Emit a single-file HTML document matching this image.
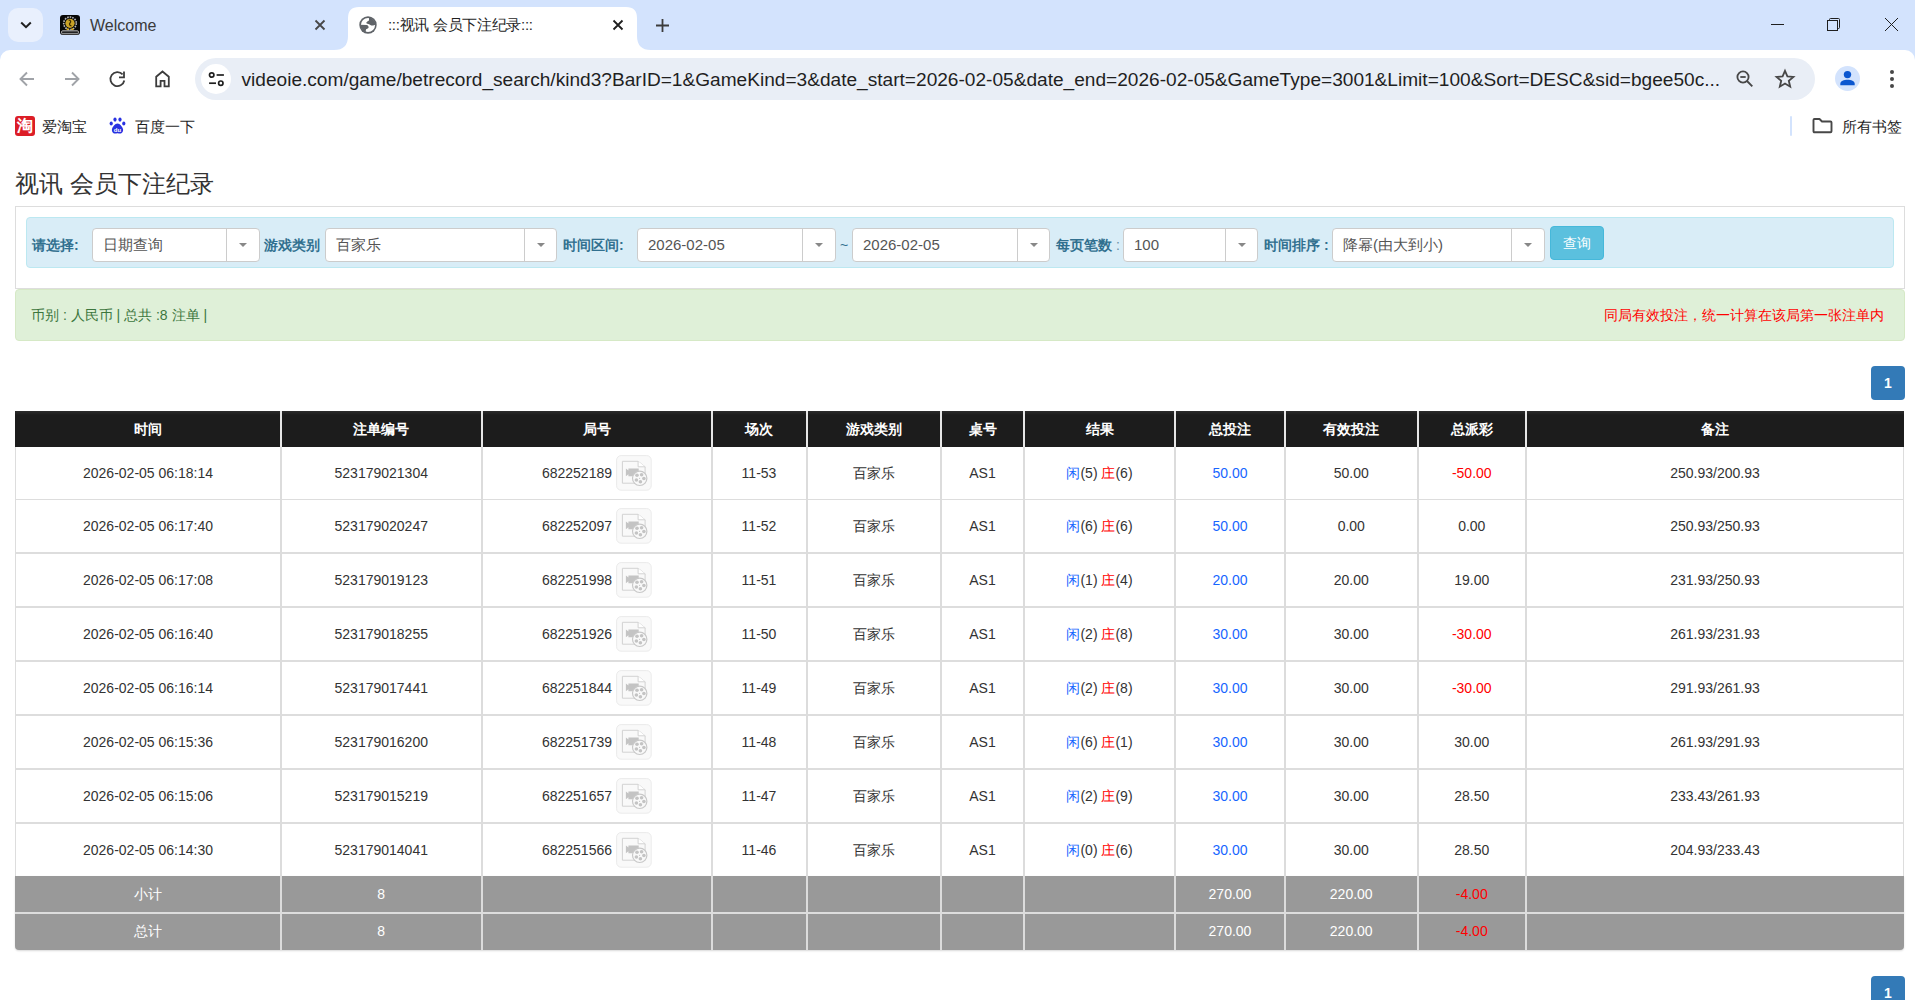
<!DOCTYPE html><html><head><meta charset="utf-8"><style>
*{box-sizing:border-box;margin:0;padding:0}
html,body{width:1915px;height:1000px;overflow:hidden;background:#fff}
body{position:relative;font-family:"Liberation Sans",sans-serif;color:#333}
.a{position:absolute}
.t{position:absolute;white-space:nowrap;line-height:1}
svg{position:absolute;overflow:visible}
</style></head><body>
<div class="a" style="left:0;top:0;width:1915px;height:62px;background:#d3e3fd"></div>
<div class="a" style="left:8px;top:8px;width:35px;height:34px;border-radius:10px;background:#e9f0fd"></div>
<svg style="left:20px;top:21px" width="12" height="8"><path d="M1.2 1.5 L6 6.2 L10.8 1.5" fill="none" stroke="#1f1f1f" stroke-width="2"/></svg>
<svg style="left:60px;top:15px" width="20" height="20" viewBox="0 0 20 20"><rect x="0" y="0" width="20" height="20" rx="3" fill="#060606"/><circle cx="10" cy="8.3" r="6.3" fill="none" stroke="#b8b8b8" stroke-width="1.6" stroke-dasharray="1.6 1"/><circle cx="10" cy="8.3" r="4.6" fill="#c9a227"/><path d="M8.5 5 C10.5 5 11.5 6.5 10 8 C9 9 9.5 10.5 11.5 11" fill="none" stroke="#3a2a00" stroke-width="1.2"/><circle cx="7.6" cy="14.2" r="1" fill="#e0a800"/><circle cx="12.4" cy="14.2" r="1" fill="#e0a800"/><rect x="1.6" y="15.8" width="16.8" height="3" rx="1" fill="#222" stroke="#c8c8c8" stroke-width="0.9"/></svg>
<div class="t" style="left:90px;top:18.2px;font-size:16px;color:#3a3a3a">Welcome</div>
<svg style="left:315px;top:20px" width="10" height="10"><path d="M0.5 0.5 L9.5 9.5 M9.5 0.5 L0.5 9.5" stroke="#474747" stroke-width="1.8"/></svg>
<svg style="left:0;top:0" width="1915" height="50"><path d="M334 50 Q348 50 348 36 L348 18 Q348 7 359 7 L626 7 Q637 7 637 18 L637 36 Q637 50 651 50 Z" fill="#fff"/></svg>
<svg style="left:355px;top:12px" width="26" height="26" viewBox="0 0 26 26"><defs><clipPath id="gc"><circle cx="13" cy="13" r="7.6"/></clipPath></defs><circle cx="13" cy="13" r="8.7" fill="#5f6368"/><circle cx="13" cy="13" r="7.1" fill="#fff"/><g clip-path="url(#gc)" fill="#5f6368"><path d="M14 3 L14 7.8 C14 8.8 13 9.2 12 9.8 C11 10.4 11.2 11.6 12.4 11.8 C13.6 12 14.6 12.4 15.4 13 C16.4 13.6 17.6 13.7 19 13.2 L23 12 L23 3 Z"/><path d="M3 12.7 L11.6 12.9 C12.8 13 13.6 14 13.6 15.2 C13.6 16.2 12.6 16.6 11.6 16.9 C10.9 17.2 10.8 17.8 10.8 18.6 L10.8 23 L3 23 Z"/></g></svg>
<div class="t" style="left:388px;top:16.8px;font-size:15px;letter-spacing:-0.3px;color:#1f1f1f">:::视讯 会员下注纪录:::</div>
<svg style="left:612.5px;top:20px" width="10" height="10"><path d="M0.5 0.5 L9.5 9.5 M9.5 0.5 L0.5 9.5" stroke="#1f1f1f" stroke-width="1.8"/></svg>
<svg style="left:656px;top:18.5px" width="13" height="13"><path d="M6.5 0 V13 M0 6.5 H13" stroke="#3c3c3c" stroke-width="1.8"/></svg>
<div class="a" style="left:1771px;top:24px;width:13px;height:1px;background:#1f1f1f"></div>
<svg style="left:1827px;top:18px" width="14" height="14"><path d="M2.5 2.5 V1.5 Q2.5 0.5 3.5 0.5 H11.5 Q12.5 0.5 12.5 1.5 V9.5 Q12.5 10.5 11.5 10.5 H10.5" fill="none" stroke="#1f1f1f" stroke-width="1"/><rect x="0.5" y="2.5" width="10" height="10" fill="none" stroke="#1f1f1f" stroke-width="1"/></svg>
<svg style="left:1885px;top:18px" width="13" height="13"><path d="M0 0 L13 13 M13 0 L0 13" stroke="#1f1f1f" stroke-width="1"/></svg>
<div class="a" style="left:0;top:50px;width:1915px;height:58px;background:#fff;border-radius:10px 10px 0 0"></div>
<svg style="left:19px;top:71px" width="16" height="16"><path d="M15 8 H2 M8 1.5 L1.5 8 L8 14.5" fill="none" stroke="#a0a3a8" stroke-width="1.9"/></svg>
<svg style="left:64px;top:71px" width="16" height="16"><path d="M1 8 H14 M8 1.5 L14.5 8 L8 14.5" fill="none" stroke="#a0a3a8" stroke-width="1.9"/></svg>
<svg style="left:109px;top:70.5px" width="17" height="17"><path d="M15.3 9.5 A7 7 0 1 1 13.6 3.4" fill="none" stroke="#3c3c3c" stroke-width="1.8"/><path d="M10 6.3 H15 V0.4" fill="none" stroke="#3c3c3c" stroke-width="1.8"/></svg>
<svg style="left:154px;top:70px" width="17" height="18"><path d="M2.2 16.3 V6.7 L8.5 1.5 L14.8 6.7 V16.3 H10.5 V10.8 H6.6 V16.3 Z" fill="none" stroke="#3c3c3c" stroke-width="1.8" stroke-linejoin="miter"/></svg>
<div class="a" style="left:195px;top:58px;width:1620px;height:42px;border-radius:21px;background:#e9eef6"></div>
<div class="a" style="left:201px;top:64px;width:30px;height:30px;border-radius:50%;background:#fff"></div>
<svg style="left:208px;top:72px" width="17" height="15"><circle cx="3.7" cy="3" r="2.2" fill="none" stroke="#1f1f1f" stroke-width="1.7"/><path d="M8.6 3 H15.9" stroke="#1f1f1f" stroke-width="1.7"/><circle cx="12.8" cy="11.2" r="2.2" fill="none" stroke="#1f1f1f" stroke-width="1.7"/><path d="M1.1 11.2 H8" stroke="#1f1f1f" stroke-width="1.7"/></svg>
<div class="t" id="url" style="left:241.5px;top:69.8px;font-size:19.1px;color:#1f1f1f">videoie.com/game/betrecord_search/kind3?BarID=1&amp;GameKind=3&amp;date_start=2026-02-05&amp;date_end=2026-02-05&amp;GameType=3001&amp;Limit=100&amp;Sort=DESC&amp;sid=bgee50c...</div>
<svg style="left:1736px;top:70px" width="18" height="18"><circle cx="7" cy="7" r="5.6" fill="none" stroke="#474747" stroke-width="1.8"/><path d="M4.3 7 H9.7" stroke="#474747" stroke-width="1.8"/><path d="M11 11 L16.3 16.3" stroke="#474747" stroke-width="1.9"/></svg>
<svg style="left:1775px;top:69px" width="20" height="20" viewBox="0 0 20 20"><path d="M10 1.8 L12.4 7.4 L18.4 7.9 L13.8 11.8 L15.2 17.7 L10 14.6 L4.8 17.7 L6.2 11.8 L1.6 7.9 L7.6 7.4 Z" fill="none" stroke="#474747" stroke-width="1.8" stroke-linejoin="miter"/></svg>
<div class="a" style="left:1835px;top:66px;width:25px;height:25px;border-radius:50%;background:#d3e3fd"></div>
<svg style="left:1839px;top:70px" width="17" height="17" viewBox="0 0 17 17"><circle cx="8.5" cy="4.6" r="3.7" fill="#0b57d0"/><path d="M1.3 15.3 V13.8 C1.3 11.2 5 9.8 8.5 9.8 C12 9.8 15.7 11.2 15.7 13.8 V15.3 Z" fill="#0b57d0"/></svg>
<div class="a" style="left:1890.3px;top:70px;width:4px;height:4px;border-radius:50%;background:#474747"></div>
<div class="a" style="left:1890.3px;top:76.7px;width:4px;height:4px;border-radius:50%;background:#474747"></div>
<div class="a" style="left:1890.3px;top:83.6px;width:4px;height:4px;border-radius:50%;background:#474747"></div>
<div class="a" style="left:15px;top:116px;width:20px;height:20px;border-radius:3px;background:#dc1d26"></div>
<div class="t" style="left:17px;top:118px;font-size:16px;color:#fff;font-weight:bold">淘</div>
<div class="t" style="left:42px;top:119px;font-size:15px;color:#1f1f1f">爱淘宝</div>
<svg style="left:109px;top:117px" width="17" height="17" viewBox="0 0 17 17"><ellipse cx="2.2" cy="6.5" rx="1.6" ry="2" fill="#2932e1"/><ellipse cx="6" cy="2.6" rx="1.6" ry="2.1" fill="#2932e1"/><ellipse cx="11" cy="2.6" rx="1.6" ry="2.1" fill="#2932e1"/><ellipse cx="14.8" cy="6.5" rx="1.6" ry="2" fill="#2932e1"/><path d="M8.5 6.5 C6 6.5 3.5 10 3 12 C2.5 14.5 4 16.6 6 16.6 C7.2 16.6 7.8 16.2 8.5 16.2 C9.2 16.2 9.8 16.6 11 16.6 C13 16.6 14.5 14.5 14 12 C13.5 10 11 6.5 8.5 6.5Z" fill="#2932e1"/><text x="8.5" y="15" font-size="6" fill="#fff" text-anchor="middle" font-family="Liberation Sans" font-weight="bold">du</text></svg>
<div class="t" style="left:135px;top:119px;font-size:15px;color:#1f1f1f">百度一下</div>
<div class="a" style="left:1790px;top:116px;width:2px;height:20px;border-radius:1px;background:#d3e3fd"></div>
<svg style="left:1812px;top:117px" width="22" height="17"><path d="M1.5 3 Q1.5 2 2.5 2 H7.5 L10 4.5 H18.5 Q19.5 4.5 19.5 5.5 V14.3 Q19.5 15.3 18.5 15.3 H2.5 Q1.5 15.3 1.5 14.3 Z" fill="none" stroke="#474747" stroke-width="1.9" stroke-linejoin="round"/></svg>
<div class="t" style="left:1842px;top:119px;font-size:15px;color:#1f1f1f">所有书签</div>
<div class="t" style="left:15px;top:172px;font-size:24px;color:#333">视讯 会员下注纪录</div>
<div class="a" style="left:15px;top:206px;width:1890px;height:83px;border:1px solid #ddd"></div>
<div class="a" style="left:26px;top:217px;width:1868px;height:51px;border:1px solid #bce8f1;border-radius:4px;background:#d9edf7"></div>
<div class="t" style="left:32px;top:238px;font-size:14px;font-weight:bold;color:#31708f">请选择:</div>
<div class="a" style="left:92px;top:228px;width:168px;height:34px;border:1px solid #ccc;border-radius:4px;background:#fff"></div>
<div class="a" style="left:226px;top:229px;width:1px;height:32px;background:#ccc"></div>
<svg style="left:239.0px;top:243px" width="8" height="4"><path d="M0 0 H8 L4 4 Z" fill="#888"/></svg>
<div class="t" style="left:103px;top:236.6px;font-size:15px;color:#555">日期查询</div>
<div class="t" style="left:264px;top:238px;font-size:14px;font-weight:bold;color:#31708f">游戏类别</div>
<div class="a" style="left:325px;top:228px;width:232px;height:34px;border:1px solid #ccc;border-radius:4px;background:#fff"></div>
<div class="a" style="left:524px;top:229px;width:1px;height:32px;background:#ccc"></div>
<svg style="left:536.5px;top:243px" width="8" height="4"><path d="M0 0 H8 L4 4 Z" fill="#888"/></svg>
<div class="t" style="left:336px;top:236.6px;font-size:15px;color:#555">百家乐</div>
<div class="t" style="left:563px;top:238px;font-size:14px;font-weight:bold;color:#31708f">时间区间:</div>
<div class="a" style="left:637px;top:228px;width:199px;height:34px;border:1px solid #ccc;border-radius:4px;background:#fff"></div>
<div class="a" style="left:802px;top:229px;width:1px;height:32px;background:#ccc"></div>
<svg style="left:815.0px;top:243px" width="8" height="4"><path d="M0 0 H8 L4 4 Z" fill="#888"/></svg>
<div class="t" style="left:648px;top:236.6px;font-size:15px;color:#555">2026-02-05</div>
<div class="t" style="left:840px;top:238px;font-size:14px;color:#31708f">~</div>
<div class="a" style="left:852px;top:228px;width:198px;height:34px;border:1px solid #ccc;border-radius:4px;background:#fff"></div>
<div class="a" style="left:1017px;top:229px;width:1px;height:32px;background:#ccc"></div>
<svg style="left:1029.5px;top:243px" width="8" height="4"><path d="M0 0 H8 L4 4 Z" fill="#888"/></svg>
<div class="t" style="left:863px;top:236.6px;font-size:15px;color:#555">2026-02-05</div>
<div class="t" style="left:1056px;top:238px;font-size:14px;font-weight:bold;color:#31708f">每页笔数 <span style="font-weight:normal;color:#6a8fa5">:</span></div>
<div class="a" style="left:1123px;top:228px;width:135px;height:34px;border:1px solid #ccc;border-radius:4px;background:#fff"></div>
<div class="a" style="left:1225px;top:229px;width:1px;height:32px;background:#ccc"></div>
<svg style="left:1237.5px;top:243px" width="8" height="4"><path d="M0 0 H8 L4 4 Z" fill="#888"/></svg>
<div class="t" style="left:1134px;top:236.6px;font-size:15px;color:#555">100</div>
<div class="t" style="left:1264px;top:238px;font-size:14px;font-weight:bold;color:#31708f">时间排序 :</div>
<div class="a" style="left:1332px;top:228px;width:213px;height:34px;border:1px solid #ccc;border-radius:4px;background:#fff"></div>
<div class="a" style="left:1511px;top:229px;width:1px;height:32px;background:#ccc"></div>
<svg style="left:1524.0px;top:243px" width="8" height="4"><path d="M0 0 H8 L4 4 Z" fill="#888"/></svg>
<div class="t" style="left:1343px;top:236.6px;font-size:15px;color:#555">降幂(由大到小)</div>
<div class="a" style="left:1550px;top:226px;width:54px;height:34px;border-radius:4px;background:#5bc0de;border:1px solid #46b8da"></div>
<div class="t" style="left:1563px;top:236px;font-size:14px;color:#fff">查询</div>
<div class="a" style="left:15px;top:289px;width:1890px;height:52px;border:1px solid #d6e9c6;border-radius:4px;background:#dff0d8"></div>
<div class="t" style="left:31px;top:308px;font-size:14px;color:#3c763d">币别 : 人民币 | 总共 :8 注单 |</div>
<div class="t" style="left:1604px;top:308px;font-size:14px;color:#f00">同局有效投注，统一计算在该局第一张注单内</div>
<div class="a" style="left:1871px;top:366px;width:34px;height:34px;border-radius:4px;background:#337ab7"></div>
<div class="t" style="left:1871px;top:376px;width:34px;text-align:center;font-size:14px;font-weight:bold;color:#fff">1</div>
<div class="a" style="left:1871px;top:976px;width:34px;height:34px;border-radius:4px;background:#337ab7"></div>
<div class="t" style="left:1871px;top:986px;width:34px;text-align:center;font-size:14px;font-weight:bold;color:#fff">1</div>
<div class="a" style="left:15px;top:410.5px;width:1889px;height:36.5px;background:linear-gradient(#2c2c2c,#1c1c1c 4px)"></div>
<div class="t" style="left:15px;top:421.5px;width:266px;text-align:center;font-size:14px;font-weight:bold;color:#fff">时间</div>
<div class="t" style="left:281px;top:421.5px;width:200.5px;text-align:center;font-size:14px;font-weight:bold;color:#fff">注单编号</div>
<div class="t" style="left:481.5px;top:421.5px;width:230.0px;text-align:center;font-size:14px;font-weight:bold;color:#fff">局号</div>
<div class="t" style="left:711.5px;top:421.5px;width:95.0px;text-align:center;font-size:14px;font-weight:bold;color:#fff">场次</div>
<div class="t" style="left:806.5px;top:421.5px;width:134.5px;text-align:center;font-size:14px;font-weight:bold;color:#fff">游戏类别</div>
<div class="t" style="left:941px;top:421.5px;width:83px;text-align:center;font-size:14px;font-weight:bold;color:#fff">桌号</div>
<div class="t" style="left:1024px;top:421.5px;width:151px;text-align:center;font-size:14px;font-weight:bold;color:#fff">结果</div>
<div class="t" style="left:1175px;top:421.5px;width:110px;text-align:center;font-size:14px;font-weight:bold;color:#fff">总投注</div>
<div class="t" style="left:1285px;top:421.5px;width:132.5px;text-align:center;font-size:14px;font-weight:bold;color:#fff">有效投注</div>
<div class="t" style="left:1417.5px;top:421.5px;width:108.5px;text-align:center;font-size:14px;font-weight:bold;color:#fff">总派彩</div>
<div class="t" style="left:1526px;top:421.5px;width:378px;text-align:center;font-size:14px;font-weight:bold;color:#fff">备注</div>
<div class="a" style="left:15px;top:499px;width:1889px;height:1.3px;background:#ddd"></div>
<div class="a" style="left:15px;top:552px;width:1889px;height:2px;background:#ddd"></div>
<div class="a" style="left:15px;top:606px;width:1889px;height:2px;background:#ddd"></div>
<div class="a" style="left:15px;top:660px;width:1889px;height:2px;background:#ddd"></div>
<div class="a" style="left:15px;top:714px;width:1889px;height:2px;background:#ddd"></div>
<div class="a" style="left:15px;top:768px;width:1889px;height:2px;background:#ddd"></div>
<div class="a" style="left:15px;top:822px;width:1889px;height:2px;background:#ddd"></div>
<div class="t" style="left:15px;top:466.4px;width:266px;text-align:center;font-size:14px;color:#333">2026-02-05 06:18:14</div>
<div class="t" style="left:281px;top:466.4px;width:200.5px;text-align:center;font-size:14px;color:#333">523179021304</div>
<div class="t" style="left:481.5px;top:466.4px;width:130.5px;text-align:right;font-size:14px;color:#333">682252189</div>
<svg style="left:615.6px;top:454.6px" width="36" height="36" viewBox="0 0 36 36"><rect x="0.6" y="0.6" width="34.6" height="34.6" rx="4.5" fill="#f9f9f9" stroke="#ebebeb" stroke-width="1"/><path d="M6.4 6.3 H22.1 L29.1 11.8 V28.2 H6.4 Z" fill="#f9f9f9" stroke="#d2d2d2" stroke-width="1"/><path d="M22.1 6.3 V11.8 H29.1" fill="#fff" stroke="#d2d2d2" stroke-width="1"/><path d="M9.9 13.6 L12.4 15.6 V13.6 H22.7 V21.2 H12.4 V19.3 L9.9 21.2 Z" fill="#c4c4c4"/><circle cx="23.7" cy="23.3" r="7.2" fill="#f9f9f9" stroke="#c8c8c8" stroke-width="1.2"/><g fill="#c4c4c4"><circle cx="21" cy="20.3" r="1.8"/><circle cx="25.6" cy="19.7" r="1.8"/><circle cx="27.9" cy="23.5" r="1.8"/><circle cx="24.4" cy="26.8" r="1.8"/><circle cx="20.4" cy="25" r="1.8"/><circle cx="23.6" cy="23.3" r="0.6"/></g></svg>
<div class="t" style="left:711.5px;top:466.4px;width:95.0px;text-align:center;font-size:14px;color:#333">11-53</div>
<div class="t" style="left:806.5px;top:466.4px;width:134.5px;text-align:center;font-size:14px;color:#333">百家乐</div>
<div class="t" style="left:941px;top:466.4px;width:83px;text-align:center;font-size:14px;color:#333">AS1</div>
<div class="t" style="left:1024px;top:466.4px;width:151px;text-align:center;font-size:14px;color:#333"><span style="color:#1766ff">闲</span>(5) <span style="color:#f00">庄</span>(6)</div>
<div class="t" style="left:1175px;top:466.4px;width:110px;text-align:center;font-size:14px;color:#1766ff">50.00</div>
<div class="t" style="left:1285px;top:466.4px;width:132.5px;text-align:center;font-size:14px;color:#333">50.00</div>
<div class="t" style="left:1417.5px;top:466.4px;width:108.5px;text-align:center;font-size:14px;color:#f00">-50.00</div>
<div class="t" style="left:1526px;top:466.4px;width:378px;text-align:center;font-size:14px;color:#333">250.93/200.93</div>
<div class="t" style="left:15px;top:519.4px;width:266px;text-align:center;font-size:14px;color:#333">2026-02-05 06:17:40</div>
<div class="t" style="left:281px;top:519.4px;width:200.5px;text-align:center;font-size:14px;color:#333">523179020247</div>
<div class="t" style="left:481.5px;top:519.4px;width:130.5px;text-align:right;font-size:14px;color:#333">682252097</div>
<svg style="left:615.6px;top:507.6px" width="36" height="36" viewBox="0 0 36 36"><rect x="0.6" y="0.6" width="34.6" height="34.6" rx="4.5" fill="#f9f9f9" stroke="#ebebeb" stroke-width="1"/><path d="M6.4 6.3 H22.1 L29.1 11.8 V28.2 H6.4 Z" fill="#f9f9f9" stroke="#d2d2d2" stroke-width="1"/><path d="M22.1 6.3 V11.8 H29.1" fill="#fff" stroke="#d2d2d2" stroke-width="1"/><path d="M9.9 13.6 L12.4 15.6 V13.6 H22.7 V21.2 H12.4 V19.3 L9.9 21.2 Z" fill="#c4c4c4"/><circle cx="23.7" cy="23.3" r="7.2" fill="#f9f9f9" stroke="#c8c8c8" stroke-width="1.2"/><g fill="#c4c4c4"><circle cx="21" cy="20.3" r="1.8"/><circle cx="25.6" cy="19.7" r="1.8"/><circle cx="27.9" cy="23.5" r="1.8"/><circle cx="24.4" cy="26.8" r="1.8"/><circle cx="20.4" cy="25" r="1.8"/><circle cx="23.6" cy="23.3" r="0.6"/></g></svg>
<div class="t" style="left:711.5px;top:519.4px;width:95.0px;text-align:center;font-size:14px;color:#333">11-52</div>
<div class="t" style="left:806.5px;top:519.4px;width:134.5px;text-align:center;font-size:14px;color:#333">百家乐</div>
<div class="t" style="left:941px;top:519.4px;width:83px;text-align:center;font-size:14px;color:#333">AS1</div>
<div class="t" style="left:1024px;top:519.4px;width:151px;text-align:center;font-size:14px;color:#333"><span style="color:#1766ff">闲</span>(6) <span style="color:#f00">庄</span>(6)</div>
<div class="t" style="left:1175px;top:519.4px;width:110px;text-align:center;font-size:14px;color:#1766ff">50.00</div>
<div class="t" style="left:1285px;top:519.4px;width:132.5px;text-align:center;font-size:14px;color:#333">0.00</div>
<div class="t" style="left:1417.5px;top:519.4px;width:108.5px;text-align:center;font-size:14px;color:#333">0.00</div>
<div class="t" style="left:1526px;top:519.4px;width:378px;text-align:center;font-size:14px;color:#333">250.93/250.93</div>
<div class="t" style="left:15px;top:573.4px;width:266px;text-align:center;font-size:14px;color:#333">2026-02-05 06:17:08</div>
<div class="t" style="left:281px;top:573.4px;width:200.5px;text-align:center;font-size:14px;color:#333">523179019123</div>
<div class="t" style="left:481.5px;top:573.4px;width:130.5px;text-align:right;font-size:14px;color:#333">682251998</div>
<svg style="left:615.6px;top:561.6px" width="36" height="36" viewBox="0 0 36 36"><rect x="0.6" y="0.6" width="34.6" height="34.6" rx="4.5" fill="#f9f9f9" stroke="#ebebeb" stroke-width="1"/><path d="M6.4 6.3 H22.1 L29.1 11.8 V28.2 H6.4 Z" fill="#f9f9f9" stroke="#d2d2d2" stroke-width="1"/><path d="M22.1 6.3 V11.8 H29.1" fill="#fff" stroke="#d2d2d2" stroke-width="1"/><path d="M9.9 13.6 L12.4 15.6 V13.6 H22.7 V21.2 H12.4 V19.3 L9.9 21.2 Z" fill="#c4c4c4"/><circle cx="23.7" cy="23.3" r="7.2" fill="#f9f9f9" stroke="#c8c8c8" stroke-width="1.2"/><g fill="#c4c4c4"><circle cx="21" cy="20.3" r="1.8"/><circle cx="25.6" cy="19.7" r="1.8"/><circle cx="27.9" cy="23.5" r="1.8"/><circle cx="24.4" cy="26.8" r="1.8"/><circle cx="20.4" cy="25" r="1.8"/><circle cx="23.6" cy="23.3" r="0.6"/></g></svg>
<div class="t" style="left:711.5px;top:573.4px;width:95.0px;text-align:center;font-size:14px;color:#333">11-51</div>
<div class="t" style="left:806.5px;top:573.4px;width:134.5px;text-align:center;font-size:14px;color:#333">百家乐</div>
<div class="t" style="left:941px;top:573.4px;width:83px;text-align:center;font-size:14px;color:#333">AS1</div>
<div class="t" style="left:1024px;top:573.4px;width:151px;text-align:center;font-size:14px;color:#333"><span style="color:#1766ff">闲</span>(1) <span style="color:#f00">庄</span>(4)</div>
<div class="t" style="left:1175px;top:573.4px;width:110px;text-align:center;font-size:14px;color:#1766ff">20.00</div>
<div class="t" style="left:1285px;top:573.4px;width:132.5px;text-align:center;font-size:14px;color:#333">20.00</div>
<div class="t" style="left:1417.5px;top:573.4px;width:108.5px;text-align:center;font-size:14px;color:#333">19.00</div>
<div class="t" style="left:1526px;top:573.4px;width:378px;text-align:center;font-size:14px;color:#333">231.93/250.93</div>
<div class="t" style="left:15px;top:627.4px;width:266px;text-align:center;font-size:14px;color:#333">2026-02-05 06:16:40</div>
<div class="t" style="left:281px;top:627.4px;width:200.5px;text-align:center;font-size:14px;color:#333">523179018255</div>
<div class="t" style="left:481.5px;top:627.4px;width:130.5px;text-align:right;font-size:14px;color:#333">682251926</div>
<svg style="left:615.6px;top:615.6px" width="36" height="36" viewBox="0 0 36 36"><rect x="0.6" y="0.6" width="34.6" height="34.6" rx="4.5" fill="#f9f9f9" stroke="#ebebeb" stroke-width="1"/><path d="M6.4 6.3 H22.1 L29.1 11.8 V28.2 H6.4 Z" fill="#f9f9f9" stroke="#d2d2d2" stroke-width="1"/><path d="M22.1 6.3 V11.8 H29.1" fill="#fff" stroke="#d2d2d2" stroke-width="1"/><path d="M9.9 13.6 L12.4 15.6 V13.6 H22.7 V21.2 H12.4 V19.3 L9.9 21.2 Z" fill="#c4c4c4"/><circle cx="23.7" cy="23.3" r="7.2" fill="#f9f9f9" stroke="#c8c8c8" stroke-width="1.2"/><g fill="#c4c4c4"><circle cx="21" cy="20.3" r="1.8"/><circle cx="25.6" cy="19.7" r="1.8"/><circle cx="27.9" cy="23.5" r="1.8"/><circle cx="24.4" cy="26.8" r="1.8"/><circle cx="20.4" cy="25" r="1.8"/><circle cx="23.6" cy="23.3" r="0.6"/></g></svg>
<div class="t" style="left:711.5px;top:627.4px;width:95.0px;text-align:center;font-size:14px;color:#333">11-50</div>
<div class="t" style="left:806.5px;top:627.4px;width:134.5px;text-align:center;font-size:14px;color:#333">百家乐</div>
<div class="t" style="left:941px;top:627.4px;width:83px;text-align:center;font-size:14px;color:#333">AS1</div>
<div class="t" style="left:1024px;top:627.4px;width:151px;text-align:center;font-size:14px;color:#333"><span style="color:#1766ff">闲</span>(2) <span style="color:#f00">庄</span>(8)</div>
<div class="t" style="left:1175px;top:627.4px;width:110px;text-align:center;font-size:14px;color:#1766ff">30.00</div>
<div class="t" style="left:1285px;top:627.4px;width:132.5px;text-align:center;font-size:14px;color:#333">30.00</div>
<div class="t" style="left:1417.5px;top:627.4px;width:108.5px;text-align:center;font-size:14px;color:#f00">-30.00</div>
<div class="t" style="left:1526px;top:627.4px;width:378px;text-align:center;font-size:14px;color:#333">261.93/231.93</div>
<div class="t" style="left:15px;top:681.4px;width:266px;text-align:center;font-size:14px;color:#333">2026-02-05 06:16:14</div>
<div class="t" style="left:281px;top:681.4px;width:200.5px;text-align:center;font-size:14px;color:#333">523179017441</div>
<div class="t" style="left:481.5px;top:681.4px;width:130.5px;text-align:right;font-size:14px;color:#333">682251844</div>
<svg style="left:615.6px;top:669.6px" width="36" height="36" viewBox="0 0 36 36"><rect x="0.6" y="0.6" width="34.6" height="34.6" rx="4.5" fill="#f9f9f9" stroke="#ebebeb" stroke-width="1"/><path d="M6.4 6.3 H22.1 L29.1 11.8 V28.2 H6.4 Z" fill="#f9f9f9" stroke="#d2d2d2" stroke-width="1"/><path d="M22.1 6.3 V11.8 H29.1" fill="#fff" stroke="#d2d2d2" stroke-width="1"/><path d="M9.9 13.6 L12.4 15.6 V13.6 H22.7 V21.2 H12.4 V19.3 L9.9 21.2 Z" fill="#c4c4c4"/><circle cx="23.7" cy="23.3" r="7.2" fill="#f9f9f9" stroke="#c8c8c8" stroke-width="1.2"/><g fill="#c4c4c4"><circle cx="21" cy="20.3" r="1.8"/><circle cx="25.6" cy="19.7" r="1.8"/><circle cx="27.9" cy="23.5" r="1.8"/><circle cx="24.4" cy="26.8" r="1.8"/><circle cx="20.4" cy="25" r="1.8"/><circle cx="23.6" cy="23.3" r="0.6"/></g></svg>
<div class="t" style="left:711.5px;top:681.4px;width:95.0px;text-align:center;font-size:14px;color:#333">11-49</div>
<div class="t" style="left:806.5px;top:681.4px;width:134.5px;text-align:center;font-size:14px;color:#333">百家乐</div>
<div class="t" style="left:941px;top:681.4px;width:83px;text-align:center;font-size:14px;color:#333">AS1</div>
<div class="t" style="left:1024px;top:681.4px;width:151px;text-align:center;font-size:14px;color:#333"><span style="color:#1766ff">闲</span>(2) <span style="color:#f00">庄</span>(8)</div>
<div class="t" style="left:1175px;top:681.4px;width:110px;text-align:center;font-size:14px;color:#1766ff">30.00</div>
<div class="t" style="left:1285px;top:681.4px;width:132.5px;text-align:center;font-size:14px;color:#333">30.00</div>
<div class="t" style="left:1417.5px;top:681.4px;width:108.5px;text-align:center;font-size:14px;color:#f00">-30.00</div>
<div class="t" style="left:1526px;top:681.4px;width:378px;text-align:center;font-size:14px;color:#333">291.93/261.93</div>
<div class="t" style="left:15px;top:735.4px;width:266px;text-align:center;font-size:14px;color:#333">2026-02-05 06:15:36</div>
<div class="t" style="left:281px;top:735.4px;width:200.5px;text-align:center;font-size:14px;color:#333">523179016200</div>
<div class="t" style="left:481.5px;top:735.4px;width:130.5px;text-align:right;font-size:14px;color:#333">682251739</div>
<svg style="left:615.6px;top:723.6px" width="36" height="36" viewBox="0 0 36 36"><rect x="0.6" y="0.6" width="34.6" height="34.6" rx="4.5" fill="#f9f9f9" stroke="#ebebeb" stroke-width="1"/><path d="M6.4 6.3 H22.1 L29.1 11.8 V28.2 H6.4 Z" fill="#f9f9f9" stroke="#d2d2d2" stroke-width="1"/><path d="M22.1 6.3 V11.8 H29.1" fill="#fff" stroke="#d2d2d2" stroke-width="1"/><path d="M9.9 13.6 L12.4 15.6 V13.6 H22.7 V21.2 H12.4 V19.3 L9.9 21.2 Z" fill="#c4c4c4"/><circle cx="23.7" cy="23.3" r="7.2" fill="#f9f9f9" stroke="#c8c8c8" stroke-width="1.2"/><g fill="#c4c4c4"><circle cx="21" cy="20.3" r="1.8"/><circle cx="25.6" cy="19.7" r="1.8"/><circle cx="27.9" cy="23.5" r="1.8"/><circle cx="24.4" cy="26.8" r="1.8"/><circle cx="20.4" cy="25" r="1.8"/><circle cx="23.6" cy="23.3" r="0.6"/></g></svg>
<div class="t" style="left:711.5px;top:735.4px;width:95.0px;text-align:center;font-size:14px;color:#333">11-48</div>
<div class="t" style="left:806.5px;top:735.4px;width:134.5px;text-align:center;font-size:14px;color:#333">百家乐</div>
<div class="t" style="left:941px;top:735.4px;width:83px;text-align:center;font-size:14px;color:#333">AS1</div>
<div class="t" style="left:1024px;top:735.4px;width:151px;text-align:center;font-size:14px;color:#333"><span style="color:#1766ff">闲</span>(6) <span style="color:#f00">庄</span>(1)</div>
<div class="t" style="left:1175px;top:735.4px;width:110px;text-align:center;font-size:14px;color:#1766ff">30.00</div>
<div class="t" style="left:1285px;top:735.4px;width:132.5px;text-align:center;font-size:14px;color:#333">30.00</div>
<div class="t" style="left:1417.5px;top:735.4px;width:108.5px;text-align:center;font-size:14px;color:#333">30.00</div>
<div class="t" style="left:1526px;top:735.4px;width:378px;text-align:center;font-size:14px;color:#333">261.93/291.93</div>
<div class="t" style="left:15px;top:789.4px;width:266px;text-align:center;font-size:14px;color:#333">2026-02-05 06:15:06</div>
<div class="t" style="left:281px;top:789.4px;width:200.5px;text-align:center;font-size:14px;color:#333">523179015219</div>
<div class="t" style="left:481.5px;top:789.4px;width:130.5px;text-align:right;font-size:14px;color:#333">682251657</div>
<svg style="left:615.6px;top:777.6px" width="36" height="36" viewBox="0 0 36 36"><rect x="0.6" y="0.6" width="34.6" height="34.6" rx="4.5" fill="#f9f9f9" stroke="#ebebeb" stroke-width="1"/><path d="M6.4 6.3 H22.1 L29.1 11.8 V28.2 H6.4 Z" fill="#f9f9f9" stroke="#d2d2d2" stroke-width="1"/><path d="M22.1 6.3 V11.8 H29.1" fill="#fff" stroke="#d2d2d2" stroke-width="1"/><path d="M9.9 13.6 L12.4 15.6 V13.6 H22.7 V21.2 H12.4 V19.3 L9.9 21.2 Z" fill="#c4c4c4"/><circle cx="23.7" cy="23.3" r="7.2" fill="#f9f9f9" stroke="#c8c8c8" stroke-width="1.2"/><g fill="#c4c4c4"><circle cx="21" cy="20.3" r="1.8"/><circle cx="25.6" cy="19.7" r="1.8"/><circle cx="27.9" cy="23.5" r="1.8"/><circle cx="24.4" cy="26.8" r="1.8"/><circle cx="20.4" cy="25" r="1.8"/><circle cx="23.6" cy="23.3" r="0.6"/></g></svg>
<div class="t" style="left:711.5px;top:789.4px;width:95.0px;text-align:center;font-size:14px;color:#333">11-47</div>
<div class="t" style="left:806.5px;top:789.4px;width:134.5px;text-align:center;font-size:14px;color:#333">百家乐</div>
<div class="t" style="left:941px;top:789.4px;width:83px;text-align:center;font-size:14px;color:#333">AS1</div>
<div class="t" style="left:1024px;top:789.4px;width:151px;text-align:center;font-size:14px;color:#333"><span style="color:#1766ff">闲</span>(2) <span style="color:#f00">庄</span>(9)</div>
<div class="t" style="left:1175px;top:789.4px;width:110px;text-align:center;font-size:14px;color:#1766ff">30.00</div>
<div class="t" style="left:1285px;top:789.4px;width:132.5px;text-align:center;font-size:14px;color:#333">30.00</div>
<div class="t" style="left:1417.5px;top:789.4px;width:108.5px;text-align:center;font-size:14px;color:#333">28.50</div>
<div class="t" style="left:1526px;top:789.4px;width:378px;text-align:center;font-size:14px;color:#333">233.43/261.93</div>
<div class="t" style="left:15px;top:843.4px;width:266px;text-align:center;font-size:14px;color:#333">2026-02-05 06:14:30</div>
<div class="t" style="left:281px;top:843.4px;width:200.5px;text-align:center;font-size:14px;color:#333">523179014041</div>
<div class="t" style="left:481.5px;top:843.4px;width:130.5px;text-align:right;font-size:14px;color:#333">682251566</div>
<svg style="left:615.6px;top:831.6px" width="36" height="36" viewBox="0 0 36 36"><rect x="0.6" y="0.6" width="34.6" height="34.6" rx="4.5" fill="#f9f9f9" stroke="#ebebeb" stroke-width="1"/><path d="M6.4 6.3 H22.1 L29.1 11.8 V28.2 H6.4 Z" fill="#f9f9f9" stroke="#d2d2d2" stroke-width="1"/><path d="M22.1 6.3 V11.8 H29.1" fill="#fff" stroke="#d2d2d2" stroke-width="1"/><path d="M9.9 13.6 L12.4 15.6 V13.6 H22.7 V21.2 H12.4 V19.3 L9.9 21.2 Z" fill="#c4c4c4"/><circle cx="23.7" cy="23.3" r="7.2" fill="#f9f9f9" stroke="#c8c8c8" stroke-width="1.2"/><g fill="#c4c4c4"><circle cx="21" cy="20.3" r="1.8"/><circle cx="25.6" cy="19.7" r="1.8"/><circle cx="27.9" cy="23.5" r="1.8"/><circle cx="24.4" cy="26.8" r="1.8"/><circle cx="20.4" cy="25" r="1.8"/><circle cx="23.6" cy="23.3" r="0.6"/></g></svg>
<div class="t" style="left:711.5px;top:843.4px;width:95.0px;text-align:center;font-size:14px;color:#333">11-46</div>
<div class="t" style="left:806.5px;top:843.4px;width:134.5px;text-align:center;font-size:14px;color:#333">百家乐</div>
<div class="t" style="left:941px;top:843.4px;width:83px;text-align:center;font-size:14px;color:#333">AS1</div>
<div class="t" style="left:1024px;top:843.4px;width:151px;text-align:center;font-size:14px;color:#333"><span style="color:#1766ff">闲</span>(0) <span style="color:#f00">庄</span>(6)</div>
<div class="t" style="left:1175px;top:843.4px;width:110px;text-align:center;font-size:14px;color:#1766ff">30.00</div>
<div class="t" style="left:1285px;top:843.4px;width:132.5px;text-align:center;font-size:14px;color:#333">30.00</div>
<div class="t" style="left:1417.5px;top:843.4px;width:108.5px;text-align:center;font-size:14px;color:#333">28.50</div>
<div class="t" style="left:1526px;top:843.4px;width:378px;text-align:center;font-size:14px;color:#333">204.93/233.43</div>
<div class="a" style="left:15px;top:876px;width:1889px;height:73.5px;background:#999;border-radius:0 0 4px 4px;box-shadow:0 1px 2px rgba(0,0,0,.15)"></div>
<div class="a" style="left:15px;top:912px;width:1889px;height:2px;background:#ddd"></div>
<div class="t" style="left:15px;top:886.95px;width:266px;text-align:center;font-size:14px;color:#fff">小计</div>
<div class="t" style="left:281px;top:886.95px;width:200.5px;text-align:center;font-size:14px;color:#fff">8</div>
<div class="t" style="left:1175px;top:886.95px;width:110px;text-align:center;font-size:14px;color:#fff">270.00</div>
<div class="t" style="left:1285px;top:886.95px;width:132.5px;text-align:center;font-size:14px;color:#fff">220.00</div>
<div class="t" style="left:1417.5px;top:886.95px;width:108.5px;text-align:center;font-size:14px;color:#f00">-4.00</div>
<div class="t" style="left:15px;top:924.2px;width:266px;text-align:center;font-size:14px;color:#fff">总计</div>
<div class="t" style="left:281px;top:924.2px;width:200.5px;text-align:center;font-size:14px;color:#fff">8</div>
<div class="t" style="left:1175px;top:924.2px;width:110px;text-align:center;font-size:14px;color:#fff">270.00</div>
<div class="t" style="left:1285px;top:924.2px;width:132.5px;text-align:center;font-size:14px;color:#fff">220.00</div>
<div class="t" style="left:1417.5px;top:924.2px;width:108.5px;text-align:center;font-size:14px;color:#f00">-4.00</div>
<div class="a" style="left:280px;top:410.5px;width:2px;height:36.5px;background:#e6e6e6"></div>
<div class="a" style="left:280px;top:447px;width:2px;height:502.5px;background:#dcdcdc"></div>
<div class="a" style="left:480.5px;top:410.5px;width:2px;height:36.5px;background:#e6e6e6"></div>
<div class="a" style="left:480.5px;top:447px;width:2px;height:502.5px;background:#dcdcdc"></div>
<div class="a" style="left:710.5px;top:410.5px;width:2px;height:36.5px;background:#e6e6e6"></div>
<div class="a" style="left:710.5px;top:447px;width:2px;height:502.5px;background:#dcdcdc"></div>
<div class="a" style="left:805.5px;top:410.5px;width:2px;height:36.5px;background:#e6e6e6"></div>
<div class="a" style="left:805.5px;top:447px;width:2px;height:502.5px;background:#dcdcdc"></div>
<div class="a" style="left:940px;top:410.5px;width:2px;height:36.5px;background:#e6e6e6"></div>
<div class="a" style="left:940px;top:447px;width:2px;height:502.5px;background:#dcdcdc"></div>
<div class="a" style="left:1023px;top:410.5px;width:2px;height:36.5px;background:#e6e6e6"></div>
<div class="a" style="left:1023px;top:447px;width:2px;height:502.5px;background:#dcdcdc"></div>
<div class="a" style="left:1174px;top:410.5px;width:2px;height:36.5px;background:#e6e6e6"></div>
<div class="a" style="left:1174px;top:447px;width:2px;height:502.5px;background:#dcdcdc"></div>
<div class="a" style="left:1284px;top:410.5px;width:2px;height:36.5px;background:#e6e6e6"></div>
<div class="a" style="left:1284px;top:447px;width:2px;height:502.5px;background:#dcdcdc"></div>
<div class="a" style="left:1416.5px;top:410.5px;width:2px;height:36.5px;background:#e6e6e6"></div>
<div class="a" style="left:1416.5px;top:447px;width:2px;height:502.5px;background:#dcdcdc"></div>
<div class="a" style="left:1525px;top:410.5px;width:2px;height:36.5px;background:#e6e6e6"></div>
<div class="a" style="left:1525px;top:447px;width:2px;height:502.5px;background:#dcdcdc"></div>
<div class="a" style="left:15px;top:447px;width:1.4px;height:429px;background:#ddd"></div>
<div class="a" style="left:1903px;top:447px;width:1.4px;height:429px;background:#ddd"></div>
</body></html>
